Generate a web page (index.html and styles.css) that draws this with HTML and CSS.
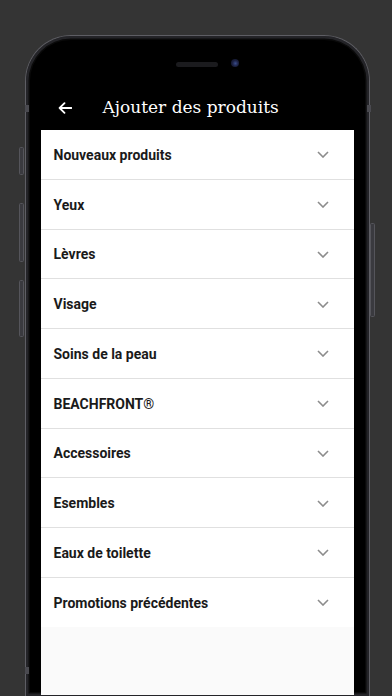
FILE: index.html
```html
<!DOCTYPE html>
<html lang="fr">
<head>
<meta charset="utf-8">
<title>Ajouter des produits</title>
<link rel="stylesheet" href="styles.css">
</head>
<body>
<div class="stage">
  <div class="phone">
    <span class="btn btn-mute"></span>
    <span class="btn btn-volup"></span>
    <span class="btn btn-voldown"></span>
    <span class="btn btn-power"></span>
    <span class="band band-l"></span>
    <span class="band band-r"></span>
    <span class="band band-bl"></span>
    <div class="topbar">
      <span class="speaker"></span>
      <span class="camera"></span>
    </div>
    <div class="screen">
      <header class="appbar">
        <svg class="back" width="14" height="12" viewBox="0 0 14 12" aria-hidden="true"><path d="M13.5 6H1.6M6.5 1.2L1.6 6l4.9 4.8" fill="none" stroke="#fff" stroke-width="1.8" stroke-linecap="round" stroke-linejoin="round"/></svg>
        <h1 class="title">Ajouter des produits</h1>
      </header>
      <ul class="list">
        <li class="row"><span>Nouveaux produits</span><svg class="chev" width="12" height="7" viewBox="0 0 12 7"><path d="M1 1l5 5 5-5" fill="none" stroke="#8c8c8c" stroke-width="1.6"/></svg></li>
        <li class="row"><span>Yeux</span><svg class="chev" width="12" height="7" viewBox="0 0 12 7"><path d="M1 1l5 5 5-5" fill="none" stroke="#8c8c8c" stroke-width="1.6"/></svg></li>
        <li class="row"><span>Lèvres</span><svg class="chev" width="12" height="7" viewBox="0 0 12 7"><path d="M1 1l5 5 5-5" fill="none" stroke="#8c8c8c" stroke-width="1.6"/></svg></li>
        <li class="row"><span>Visage</span><svg class="chev" width="12" height="7" viewBox="0 0 12 7"><path d="M1 1l5 5 5-5" fill="none" stroke="#8c8c8c" stroke-width="1.6"/></svg></li>
        <li class="row"><span>Soins de la peau</span><svg class="chev" width="12" height="7" viewBox="0 0 12 7"><path d="M1 1l5 5 5-5" fill="none" stroke="#8c8c8c" stroke-width="1.6"/></svg></li>
        <li class="row"><span>BEACHFRONT®</span><svg class="chev" width="12" height="7" viewBox="0 0 12 7"><path d="M1 1l5 5 5-5" fill="none" stroke="#8c8c8c" stroke-width="1.6"/></svg></li>
        <li class="row"><span>Accessoires</span><svg class="chev" width="12" height="7" viewBox="0 0 12 7"><path d="M1 1l5 5 5-5" fill="none" stroke="#8c8c8c" stroke-width="1.6"/></svg></li>
        <li class="row"><span>Esembles</span><svg class="chev" width="12" height="7" viewBox="0 0 12 7"><path d="M1 1l5 5 5-5" fill="none" stroke="#8c8c8c" stroke-width="1.6"/></svg></li>
        <li class="row"><span>Eaux de toilette</span><svg class="chev" width="12" height="7" viewBox="0 0 12 7"><path d="M1 1l5 5 5-5" fill="none" stroke="#8c8c8c" stroke-width="1.6"/></svg></li>
        <li class="row"><span>Promotions précédentes</span><svg class="chev" width="12" height="7" viewBox="0 0 12 7"><path d="M1 1l5 5 5-5" fill="none" stroke="#8c8c8c" stroke-width="1.6"/></svg></li>
      </ul>
    </div>
  </div>
</div>
</body>
</html>
```

FILE: styles.css
```css
html, body {
  margin: 0;
  padding: 0;
}
body {
  width: 392px;
  height: 696px;
  overflow: hidden;
  background: #343434;
  font-family: Roboto, "Liberation Sans", Arial, sans-serif;
}
.stage {
  box-sizing: border-box;
  height: 696px;
  overflow: hidden;
  padding: 35px 22px 0 25px;
}
.phone {
  position: relative;
  box-sizing: border-box;
  height: 661px;
  background: #000;
  border: 1.5px solid #5e5e64;
  border-bottom: none;
  border-radius: 46px 46px 0 0;
  box-shadow: inset 0 0 0 2.5px #242428, inset 0 0 0 4px #0a0a0a;
  padding: 23px 15.5px 0 14.5px;
}
.btn {
  position: absolute;
  width: 3px;
  background: #3a3a3f;
  border: 1px solid #55555b;
  border-radius: 1.5px;
}
.btn-mute { left: -7px; top: 111px; height: 26px; }
.btn-volup { left: -7px; top: 167px; height: 57px; }
.btn-voldown { left: -7px; top: 244px; height: 55px; }
.btn-power { right: -6px; top: 187px; height: 92px; }
.band {
  position: absolute;
  width: 4px;
  height: 7px;
  background: #4a4a50;
}
.band-l { left: -1.5px; top: 69px; }
.band-r { right: -1.5px; top: 69px; }
.band-bl { left: -1.5px; top: 631px; }
.topbar {
  display: grid;
  grid-template-columns: 1fr auto 1fr;
  align-items: center;
  height: 8px;
}
.speaker {
  grid-column: 2;
  width: 42px;
  height: 5px;
  border-radius: 3px;
  background: #1b1b1e;
  margin-top: 3px;
}
.camera {
  grid-column: 3;
  justify-self: start;
  margin-left: 13px;
  width: 8px;
  height: 8px;
  border-radius: 50%;
  background: radial-gradient(circle at 55% 55%, #3a4c8a 0, #1c2244 45%, #0c0e1c 100%);
}
.screen {
  margin-top: 17px;
  height: 611px;
  background: #fafafa;
}
.appbar {
  display: flex;
  align-items: center;
  height: 46px;
  background: #000;
  padding-left: 17px;
  gap: 31px;
}
.back {
  display: block;
  margin-top: 1px;
}
.title {
  margin: 0;
  color: #fff;
  font-family: "DejaVu Serif", "Liberation Serif", serif;
  font-weight: normal;
  font-size: 17px;
  letter-spacing: 0;
  line-height: 1;
}
.list {
  list-style: none;
  margin: 0;
  padding: 0;
  background: #fff;
}
.row {
  display: flex;
  align-items: center;
  justify-content: space-between;
  box-sizing: content-box;
  height: 47.75px;
  padding: 1px 25px 0 13px;
  border-bottom: 1px solid #e0e0e0;
  font-size: 14px;
  font-weight: bold;
  color: #1a1a1a;
}
.row:last-child {
  border-bottom: none;
}
.chev {
  display: block;
}
```
